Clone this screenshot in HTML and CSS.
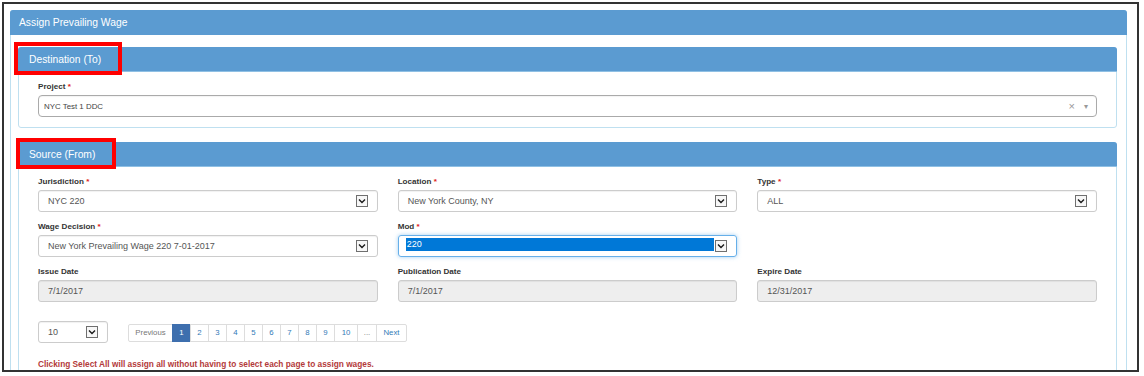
FILE: index.html
```html
<!DOCTYPE html>
<html lang="en">
<head>
    <meta charset="UTF-8">
    <title>Assign Prevailing Wage</title>
    <link rel="stylesheet" href="styles.css">
</head>
<body>
    <div class="frame">
        <div class="panel outer">
            <div class="panel-heading">Assign Prevailing Wage</div>
            <div class="panel-body outer-body">

                <!-- Destination -->
                <div class="panel inner">
                    <div class="panel-heading">
                        Destination (To)
                        <span class="mark mark-dest"></span>
                    </div>
                    <div class="panel-body">
                        <label class="label">Project <span class="req">*</span></label>
                        <div class="select2">
                            <span class="s2-text">NYC Test 1 DDC</span>
                            <span class="s2-clear">×</span>
                            <span class="s2-arrow">▾</span>
                        </div>
                    </div>
                </div>

                <!-- Source -->
                <div class="panel inner">
                    <div class="panel-heading">
                        Source (From)
                        <span class="mark mark-src"></span>
                    </div>
                    <div class="panel-body">
                        <div class="form-grid">
                            <div class="form-group">
                                <label class="label">Jurisdiction <span class="req">*</span></label>
                                <div class="select"><span class="value">NYC 220</span><svg class="drop" width="12" height="12" viewBox="0 0 12 12"><rect x="0.5" y="0.5" width="11" height="11" fill="#f7f7f7" stroke="#6f6f6f"/><path d="M3 4.5 L6 7.5 L9 4.5" fill="none" stroke="#1a1a1a" stroke-width="1.4"/></svg></div>
                            </div>
                            <div class="form-group">
                                <label class="label">Location <span class="req">*</span></label>
                                <div class="select"><span class="value">New York County, NY</span><svg class="drop" width="12" height="12" viewBox="0 0 12 12"><rect x="0.5" y="0.5" width="11" height="11" fill="#f7f7f7" stroke="#6f6f6f"/><path d="M3 4.5 L6 7.5 L9 4.5" fill="none" stroke="#1a1a1a" stroke-width="1.4"/></svg></div>
                            </div>
                            <div class="form-group">
                                <label class="label">Type <span class="req">*</span></label>
                                <div class="select"><span class="value">ALL</span><svg class="drop" width="12" height="12" viewBox="0 0 12 12"><rect x="0.5" y="0.5" width="11" height="11" fill="#f7f7f7" stroke="#6f6f6f"/><path d="M3 4.5 L6 7.5 L9 4.5" fill="none" stroke="#1a1a1a" stroke-width="1.4"/></svg></div>
                            </div>

                            <div class="form-group">
                                <label class="label">Wage Decision <span class="req">*</span></label>
                                <div class="select"><span class="value">New York Prevailing Wage 220 7-01-2017</span><svg class="drop" width="12" height="12" viewBox="0 0 12 12"><rect x="0.5" y="0.5" width="11" height="11" fill="#f7f7f7" stroke="#6f6f6f"/><path d="M3 4.5 L6 7.5 L9 4.5" fill="none" stroke="#1a1a1a" stroke-width="1.4"/></svg></div>
                            </div>
                            <div class="form-group">
                                <label class="label">Mod <span class="req">*</span></label>
                                <div class="select focused"><span class="value picked">220</span><svg class="drop" width="12" height="12" viewBox="0 0 12 12"><rect x="0.5" y="0.5" width="11" height="11" fill="#f7f7f7" stroke="#6f6f6f"/><path d="M3 4.5 L6 7.5 L9 4.5" fill="none" stroke="#1a1a1a" stroke-width="1.4"/></svg></div>
                            </div>
                            <div class="form-group"></div>

                            <div class="form-group">
                                <label class="label">Issue Date</label>
                                <div class="input disabled">7/1/2017</div>
                            </div>
                            <div class="form-group">
                                <label class="label">Publication Date</label>
                                <div class="input disabled">7/1/2017</div>
                            </div>
                            <div class="form-group">
                                <label class="label">Expire Date</label>
                                <div class="input disabled">12/31/2017</div>
                            </div>
                        </div>

                        <div class="pager-row">
                            <div class="select page-size"><span class="value">10</span><svg class="drop" width="12" height="12" viewBox="0 0 12 12"><rect x="0.5" y="0.5" width="11" height="11" fill="#f7f7f7" stroke="#6f6f6f"/><path d="M3 4.5 L6 7.5 L9 4.5" fill="none" stroke="#1a1a1a" stroke-width="1.4"/></svg></div>
                            <ul class="pagination">
                                <li class="muted w-prev">Previous</li>
                                <li class="active">1</li>
                                <li>2</li>
                                <li>3</li>
                                <li>4</li>
                                <li>5</li>
                                <li>6</li>
                                <li>7</li>
                                <li>8</li>
                                <li>9</li>
                                <li class="w-ten">10</li>
                                <li class="muted w-dots">...</li>
                                <li class="w-next">Next</li>
                            </ul>
                        </div>

                        <p class="warn">Clicking Select All will assign all without having to select each page to assign wages.</p>
                    </div>
                </div>

            </div>
        </div>
    </div>
</body>
</html>
```

FILE: styles.css
```css
body {
    margin: 0;
    background: #fff;
    font-family: "Liberation Sans", Arial, sans-serif;
    color: #333;
}

.frame {
    margin: 2px 0 0 2px;
    width: 1133px;
    height: 366px;
    border: 2px solid #333;
    overflow: hidden;
}

.panel {
    border: 1px solid #bfe0f0;
    border-radius: 3px;
    background: #fff;
}

.panel-heading {
    position: relative;
    height: 25px;
    line-height: 25px;
    margin: -1px -1px 0;
    background: #5b9bd1;
    color: #fff;
    font-size: 10.3px;
    border-radius: 3px 3px 0 0;
}

.outer {
    margin: 6px 10px 0 6px;
    height: 400px;
}

.outer > .panel-heading {
    padding-left: 9px;
}

.outer-body {
    padding: 12px 9px 0 7px;
}

.inner {
    margin-bottom: 14px;
}

.inner > .panel-heading {
    padding-left: 11px;
    border-bottom: 1px solid #8fc0e4;
    height: 24px;
    line-height: 25px;
}

.inner .panel-body {
    padding: 9px 19px 10px 19px;
}

/* red annotation boxes */
.mark {
    position: absolute;
    border: 4px solid #f00;
    box-sizing: border-box;
}

.mark-dest {
    left: -4px;
    top: -5px;
    width: 108px;
    height: 33px;
}

.mark-src {
    left: -2px;
    top: -4px;
    width: 100px;
    height: 31px;
}

.label {
    display: block;
    height: 12px;
    line-height: 12px;
    margin-bottom: 2px;
    font-size: 8.1px;
    font-weight: bold;
    color: #333;
}

.req {
    color: #e02222;
}

.select2 {
    display: flex;
    align-items: center;
    height: 22px;
    box-sizing: border-box;
    border: 1px solid #aaa;
    border-radius: 4px;
    padding: 0 8px 0 5px;
    box-shadow: inset 0 1px 1px rgba(0,0,0,0.05);
}

.s2-text {
    flex: 1;
    font-size: 7.9px;
    color: #444;
}

.s2-clear {
    font-size: 11px;
    color: #999;
    margin-right: 9px;
}

.s2-arrow {
    font-size: 8px;
    color: #999;
}

.form-grid {
    display: grid;
    grid-template-columns: 1fr 1fr 1fr;
    column-gap: 20px;
}

.form-group {
    margin-bottom: 9px;
}

.select,
.input {
    display: flex;
    align-items: center;
    height: 22px;
    box-sizing: border-box;
    border: 1px solid #ccc;
    border-radius: 3px;
    padding: 0 9px;
    font-size: 9px;
    color: #555;
    box-shadow: inset 0 1px 1px rgba(0,0,0,0.06);
}

.select .value {
    flex: 1;
    white-space: nowrap;
}

.drop {
    flex: none;
    display: block;
}

.focused {
    border-color: #66afe9;
    box-shadow: 0 0 4px rgba(102,175,233,0.6);
    padding-left: 7px;
}

.picked {
    background: #0078d7;
    color: #fff;
    height: 13px;
    line-height: 13px;
    padding-left: 1px;
    margin-top: -3px;
    margin-right: 1px;
}

.disabled {
    background: #eee;
}

.pager-row {
    display: flex;
    align-items: flex-start;
    margin-top: 10px;
}

.page-size {
    width: 70px;
}

.pagination {
    display: flex;
    list-style: none;
    margin: 3px 0 0 20px;
    padding: 0;
    border: 1px solid #ddd;
    border-radius: 2px;
    height: 18px;
    box-sizing: border-box;
}

.pagination li {
    width: 18px;
    line-height: 16px;
    text-align: center;
    font-size: 7.8px;
    color: #337ab7;
    border-left: 1px solid #ddd;
    box-sizing: border-box;
}

.pagination li:first-child {
    border-left: none;
}

.pagination .w-prev { width: 43px; }
.pagination .w-ten { width: 23px; }
.pagination .w-dots { width: 19px; }
.pagination .w-next { width: 30px; }

.pagination .muted {
    color: #777;
}

.pagination .active {
    background: #3e6fae;
    color: #fff;
    border-left-color: #3e6fae;
    margin-top: -1px;
    height: 18px;
    line-height: 18px;
}

.warn {
    margin: 15px 0 0;
    font-size: 8.3px;
    font-weight: bold;
    line-height: 12px;
    color: #b33a3a;
}
```
